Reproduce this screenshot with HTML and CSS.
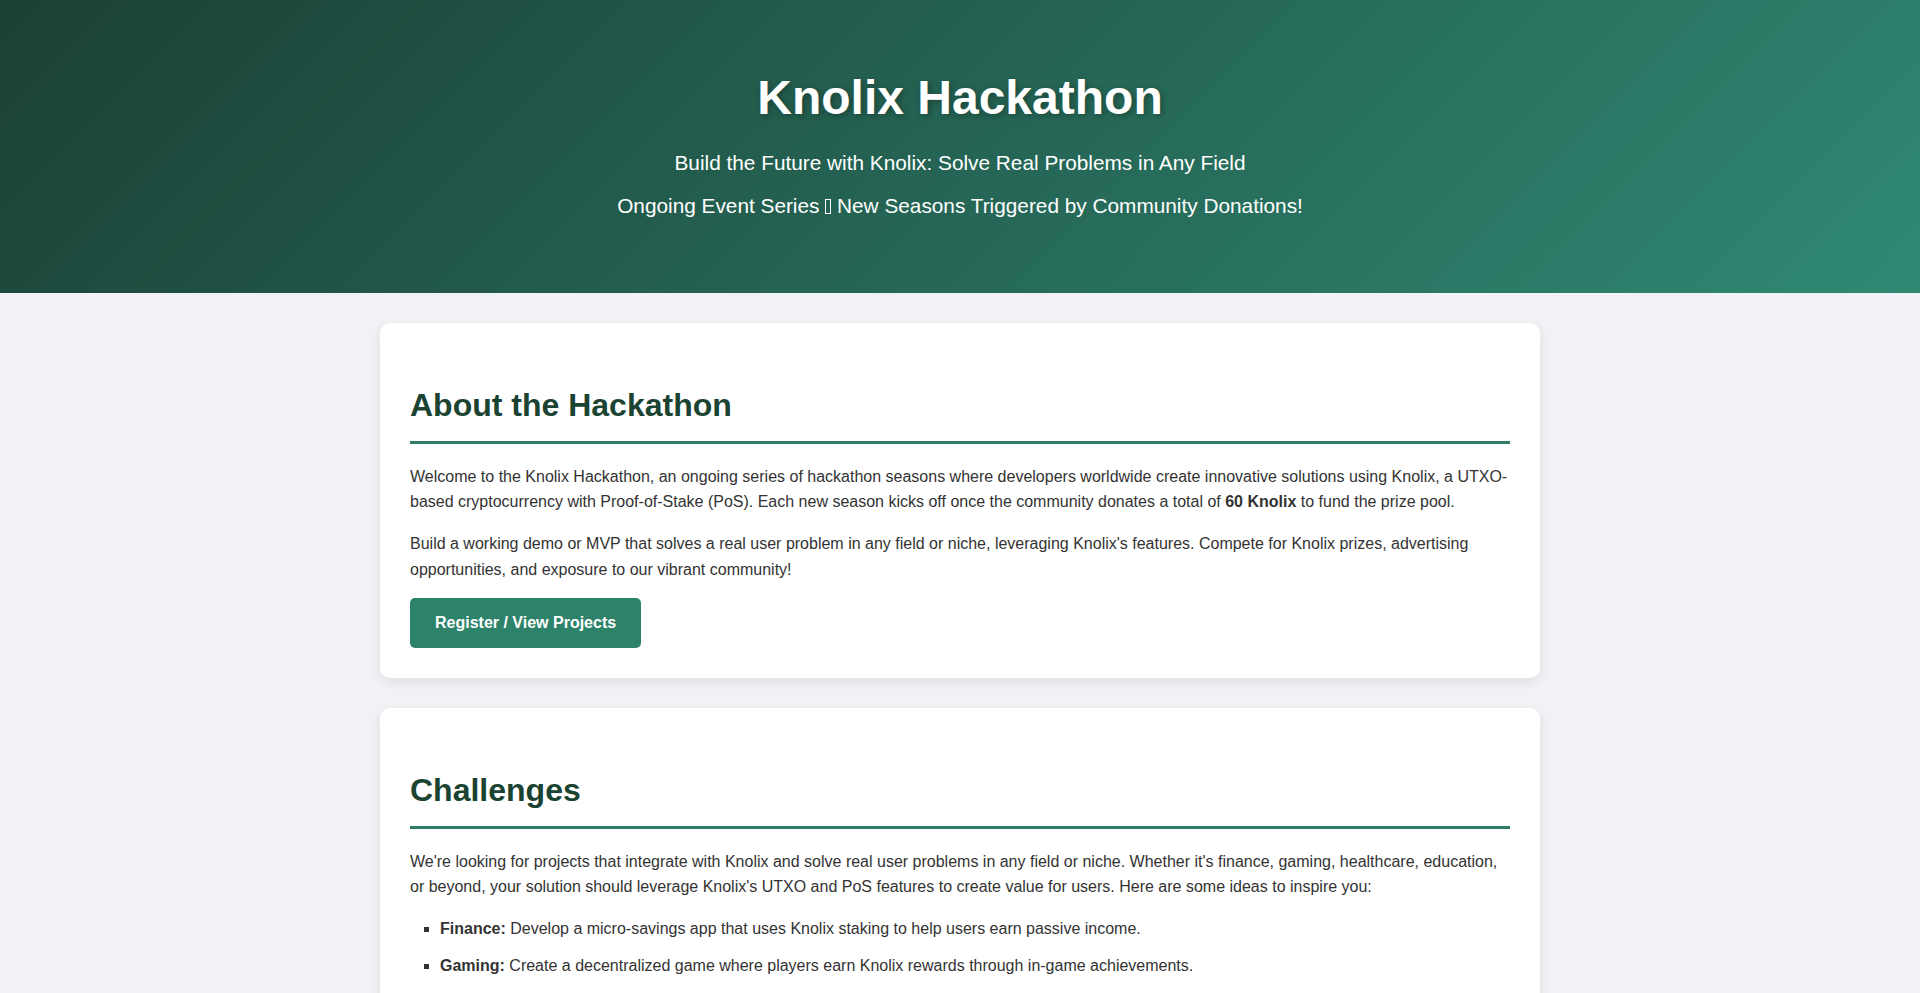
FILE: index.html
```html
<!DOCTYPE html>
<html lang="en">
<head>
<meta charset="utf-8">
<title>Knolix Hackathon</title>
<link rel="stylesheet" href="styles.css">
</head>
<body>
<header class="hero">
  <h1 class="hero-title">Knolix Hackathon</h1>
  <p class="hero-sub">Build the Future with Knolix: Solve Real Problems in Any Field</p>
  <p class="hero-sub">Ongoing Event Series <span class="tofu" aria-hidden="true"></span> New Seasons Triggered by Community Donations!</p>
</header>
<main class="container">
  <section class="card">
    <h2 class="card-title">About the Hackathon</h2>
    <p>Welcome to the Knolix Hackathon, an ongoing series of hackathon seasons where developers worldwide create innovative solutions using Knolix, a UTXO-based cryptocurrency with Proof-of-Stake (PoS). Each new season kicks off once the community donates a total of <strong>60 Knolix</strong> to fund the prize pool.</p>
    <p>Build a working demo or MVP that solves a real user problem in any field or niche, leveraging Knolix's features. Compete for Knolix prizes, advertising opportunities, and exposure to our vibrant community!</p>
    <div class="actions"><a class="btn" href="#">Register / View Projects</a></div>
  </section>
  <section class="card">
    <h2 class="card-title">Challenges</h2>
    <p>We're looking for projects that integrate with Knolix and solve real user problems in any field or niche. Whether it's finance, gaming, healthcare, education, or beyond, your solution should leverage Knolix's UTXO and PoS features to create value for users. Here are some ideas to inspire you:</p>
    <ul class="ideas">
      <li><strong>Finance:</strong> Develop a micro-savings app that uses Knolix staking to help users earn passive income.</li>
      <li><strong>Gaming:</strong> Create a decentralized game where players earn Knolix rewards through in-game achievements.</li>
      <li><strong>Healthcare:</strong> Build a platform for secure, transparent payments for medical services using Knolix.</li>
      <li><strong>Education:</strong> Design a tipping system that rewards educators and content creators with Knolix.</li>
    </ul>
  </section>
</main>
</body>
</html>
```
FILE: styles.css
```css
* { box-sizing: border-box; }
html, body { margin: 0; padding: 0; }
body {
  font-family: "Liberation Sans", Arial, sans-serif;
  font-size: 16px;
  line-height: 1.6;
  color: #333;
  background: #f0f2f5;
}
.hero {
  height: 293px;
  padding: 70px 20px 0;
  text-align: center;
  color: #fff;
  background: linear-gradient(135deg, #1b4035 0%, #256454 50%, #2f8973 100%);
}
.hero-title {
  margin: 0 0 21px;
  font-size: 48px;
  line-height: 1.15;
  font-weight: 700;
  text-shadow: 2px 2px 6px rgba(0, 0, 0, 0.3);
}
.hero-sub {
  margin: 10px 0;
  font-size: 20.8px;
  line-height: 1.6;
}
.tofu {
  display: inline-block;
  width: 6px;
  height: 15px;
  border: 1px solid currentColor;
  vertical-align: -1px;
}
.container {
  max-width: 1200px;
  margin: 30px auto 0;
  padding: 0 20px;
}
.card {
  background: #fff;
  border-radius: 10px;
  padding: 30px;
  margin-bottom: 30px;
  box-shadow: 0 4px 12px rgba(0, 0, 0, 0.08);
}
.card-title {
  margin: 34px 0 20px;
  padding-bottom: 17px;
  border-bottom: 3px solid #2e7d68;
  font-size: 32px;
  line-height: 1.15;
  color: #1b4332;
}
.card p { margin: 0 0 16px; }
.actions { line-height: 0; }
.btn {
  display: inline-block;
  padding: 12px 25px;
  background: #2d836a;
  color: #fff;
  font-weight: 700;
  line-height: 25.6px;
  text-decoration: none;
  border-radius: 5px;
}
.ideas {
  margin: 0;
  padding-left: 30px;
  list-style: square;
}
.ideas li { margin-bottom: 12px; }
```
